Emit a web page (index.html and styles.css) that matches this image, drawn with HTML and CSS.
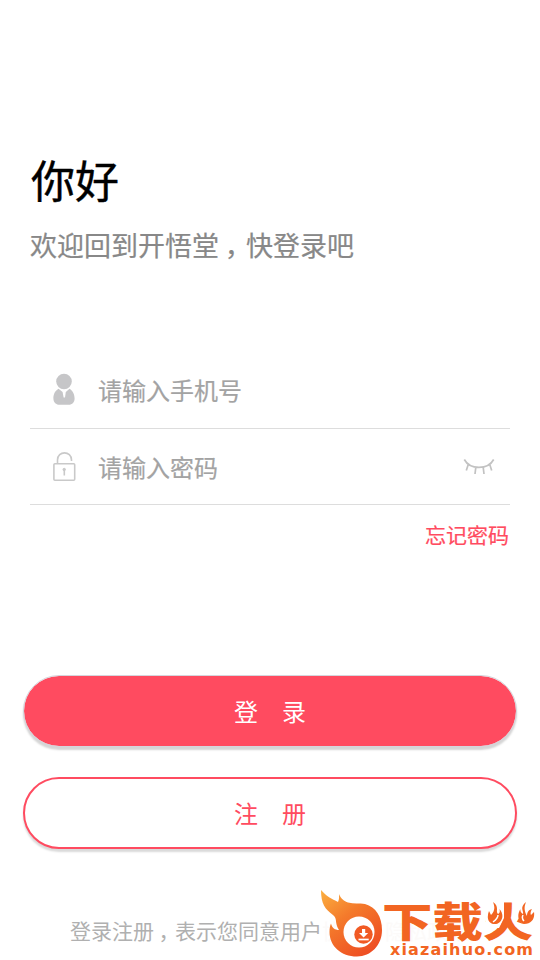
FILE: index.html
```html
<!DOCTYPE html>
<html lang="zh-CN">
<head>
<meta charset="utf-8">
<title>登录</title>
<link rel="stylesheet" href="styles.css">
</head>
<body>
<main class="screen">
  <h1 class="title">你好</h1>
  <p class="subtitle">欢迎回到开悟堂<span class="comma">，</span>快登录吧</p>
  <form class="form">
    <div class="field">
      <svg class="field-icon" viewBox="0 0 28 36">
        <g fill="#c6c6c8"><circle cx="14" cy="9.500" r="7.8"/><path d="M8.500 16.800C4.700 19 3.300 23 3.400 26.500C3.500 30.500 6 32.800 10 32.800H18.500C22.500 32.800 24.600 30 24.600 26.500C24.600 22.500 22.700 18.500 19.500 16.800L15.800 20L15 25.500H13.600L12.600 20Z"/></g>
      </svg>
      <span class="placeholder">请输入手机号</span>
    </div>
    <div class="field">
      <svg class="field-icon" viewBox="0 0 28 36" fill="none" stroke="#c9c9c9" stroke-width="1.6">
        <rect x="3.900" y="14.800" width="20.800" height="16.400" rx="1"/><path d="M7.500 14.500V11C7.500 1.500 21.500 1.500 21.500 11V12"/><circle cx="14.200" cy="20.500" r="1.200" fill="#c9c9c9" stroke-width="1"/><path d="M14.300 21V26.500"/>
      </svg>
      <span class="placeholder">请输入密码</span>
      <svg class="eye" viewBox="0 0 32 18" fill="none" stroke="#c2c2c2" stroke-width="1.700">
        <path d="M1.300 1.500C7 12 25 12 30.700 1.500M5.400 6L3.300 12.500M12.800 9.300L12 16M20.200 9.300L21 16M26.600 6L28.700 12.500"/>
      </svg>
    </div>
    <a class="forgot">忘记密码</a>
    <div class="button primary">登<span class="gap"></span>录</div>
    <div class="button outline">注<span class="gap"></span>册</div>
  </form>
  <p class="terms">登录注册<span class="comma">，</span>表示您同意用户<span class="faint">协议与隐私政策</span></p>
</main>
<div class="brand">
  <svg class="flame" viewBox="0 0 64 72">
    <defs><linearGradient id="fire" x1="0" y1="0" x2="0.700" y2="1"><stop offset="0" stop-color="#fbb040"/><stop offset="0.450" stop-color="#f47a2b"/><stop offset="1" stop-color="#ee4e23"/></linearGradient></defs>
    <path fill="url(#fire)" d="M1 2C6 8 12 11 18 14C19.500 11 19 8 19 6C21 11 24 13 28 14.500C34 16 39 15 45 16C56 19 62 29 62 42C62 57 51 68.500 37 68.500C21 68.500 9.500 58 9.500 44C9.500 40 10 38 11 35.500C12 40 15 42 19 42C14 34 18 31 13 27C5 21 1 16 1 2Z"/>
    <circle cx="39" cy="44" r="15.500" fill="#fff"/><circle cx="43.500" cy="46.500" r="9.200" fill="#f15a24"/>
    <path d="M42 41H45.200V45H48.200L43.600 49.500L39 45H42Z" fill="#fff"/><path d="M38.500 51.500H48.700" stroke="#fff" stroke-width="1.700"/>
  </svg>
  <span class="brand-name">下载火</span>
  <svg class="sparks" viewBox="0 0 50 30">
    <path fill="#fff" d="M0 0H18V17L13 27H0ZM32 0H50V27H40L32 17Z"/>
    <path fill="#f26522" d="M7 1C14 6 9 10 12 13C14 12 14 10 13.500 8C19 14 16 22 10 23L7 23C1 21 1 15 3 10L5 14C9 10 9 6 7 1ZM40 1C33 7 38 10 37 13C35 12 34 10 34.500 8C30 15 33 22 38 23C46 23 49 17 48 11L45 14C44 12 45 10 46 8C42 9 41 12 41 15C38 10 38 6 40 1Z"/>
    <path fill="none" stroke="#fff" stroke-width="1.500" d="M7 21C11 18 12 16 12 14M38 20C36 18 36 16 37 14"/>
  </svg>
  <span class="brand-url">xiazaihuo.com</span>
</div>
</body>
</html>
```
FILE: styles.css
```css
* { box-sizing: border-box; }
body { margin: 0; background: #fff; font-family: "Noto Sans CJK SC", sans-serif; }
.screen { position: relative; width: 540px; height: 960px; padding: 146px 30px 0; overflow: hidden; }
.title { margin: 0; padding-left: 1px; font-size: 44px; line-height: 66px; font-weight: 400; color: #000; -webkit-text-stroke: 0.4px; }
.subtitle { margin: 13px 0 0; font-size: 27px; line-height: 40px; color: #888; white-space: nowrap; -webkit-text-stroke: 0.2px; }
.comma { position: relative; left: 0.210em; }
.form { margin-top: 87px; }
.field { display: flex; align-items: center; height: 76px; border-bottom: 1px solid #ddd; padding: 0 15px 0 20px; }
.field:first-child { height: 77px; }
.field-icon { width: 28px; height: 36px; }
.placeholder { margin-left: 20px; font-size: 24px; line-height: 36px; color: #a3a3a3; -webkit-text-stroke: 0.2px; }
.eye { width: 32px; height: 18px; margin: 0 0 0 auto; }
.forgot { display: block; margin: 13px 1px 0 0; text-align: right; font-size: 21px; line-height: 32px; color: #ff4b60; -webkit-text-stroke: 0.2px; }
.button { display: flex; align-items: center; justify-content: center; height: 72px; margin: 0 -7px; padding-bottom: 2px; border-radius: 36px; font-size: 24px; }
.gap { width: 24px; }
.primary { margin-top: 125px; background: #ff4b60; background-clip: padding-box; border: 1px solid #d5d5dc; color: #fff; box-shadow: 0 3px 2px #d5d5d5; }
.outline { margin-top: 30px; border: 2px solid #ff4b60; color: #ff4b60; background: #fff; box-shadow: 0 3px 2px #dadada; }
.terms { margin: 66px 0 0 40px; font-size: 21px; line-height: 31px; color: #b0b0b0; white-space: nowrap; }
.faint { color: #fcfaf9; }
.brand { position: absolute; left: 320px; top: 888px; width: 220px; height: 72px; color: #f26522; }
.flame { position: absolute; left: 0; top: 0; width: 64px; height: 72px; }
.brand-name { position: absolute; left: 62px; top: 7px; font-size: 42px; line-height: 50px; font-weight: 900; white-space: nowrap; transform: scale(1.200, 0.970); transform-origin: left; }
.sparks { position: absolute; left: 166px; top: 13px; width: 50px; height: 30px; }
.brand-url { position: absolute; left: 70px; top: 53px; font: 700 16px/18px "DejaVu Sans", sans-serif; letter-spacing: 1.150px; white-space: nowrap; }
```
